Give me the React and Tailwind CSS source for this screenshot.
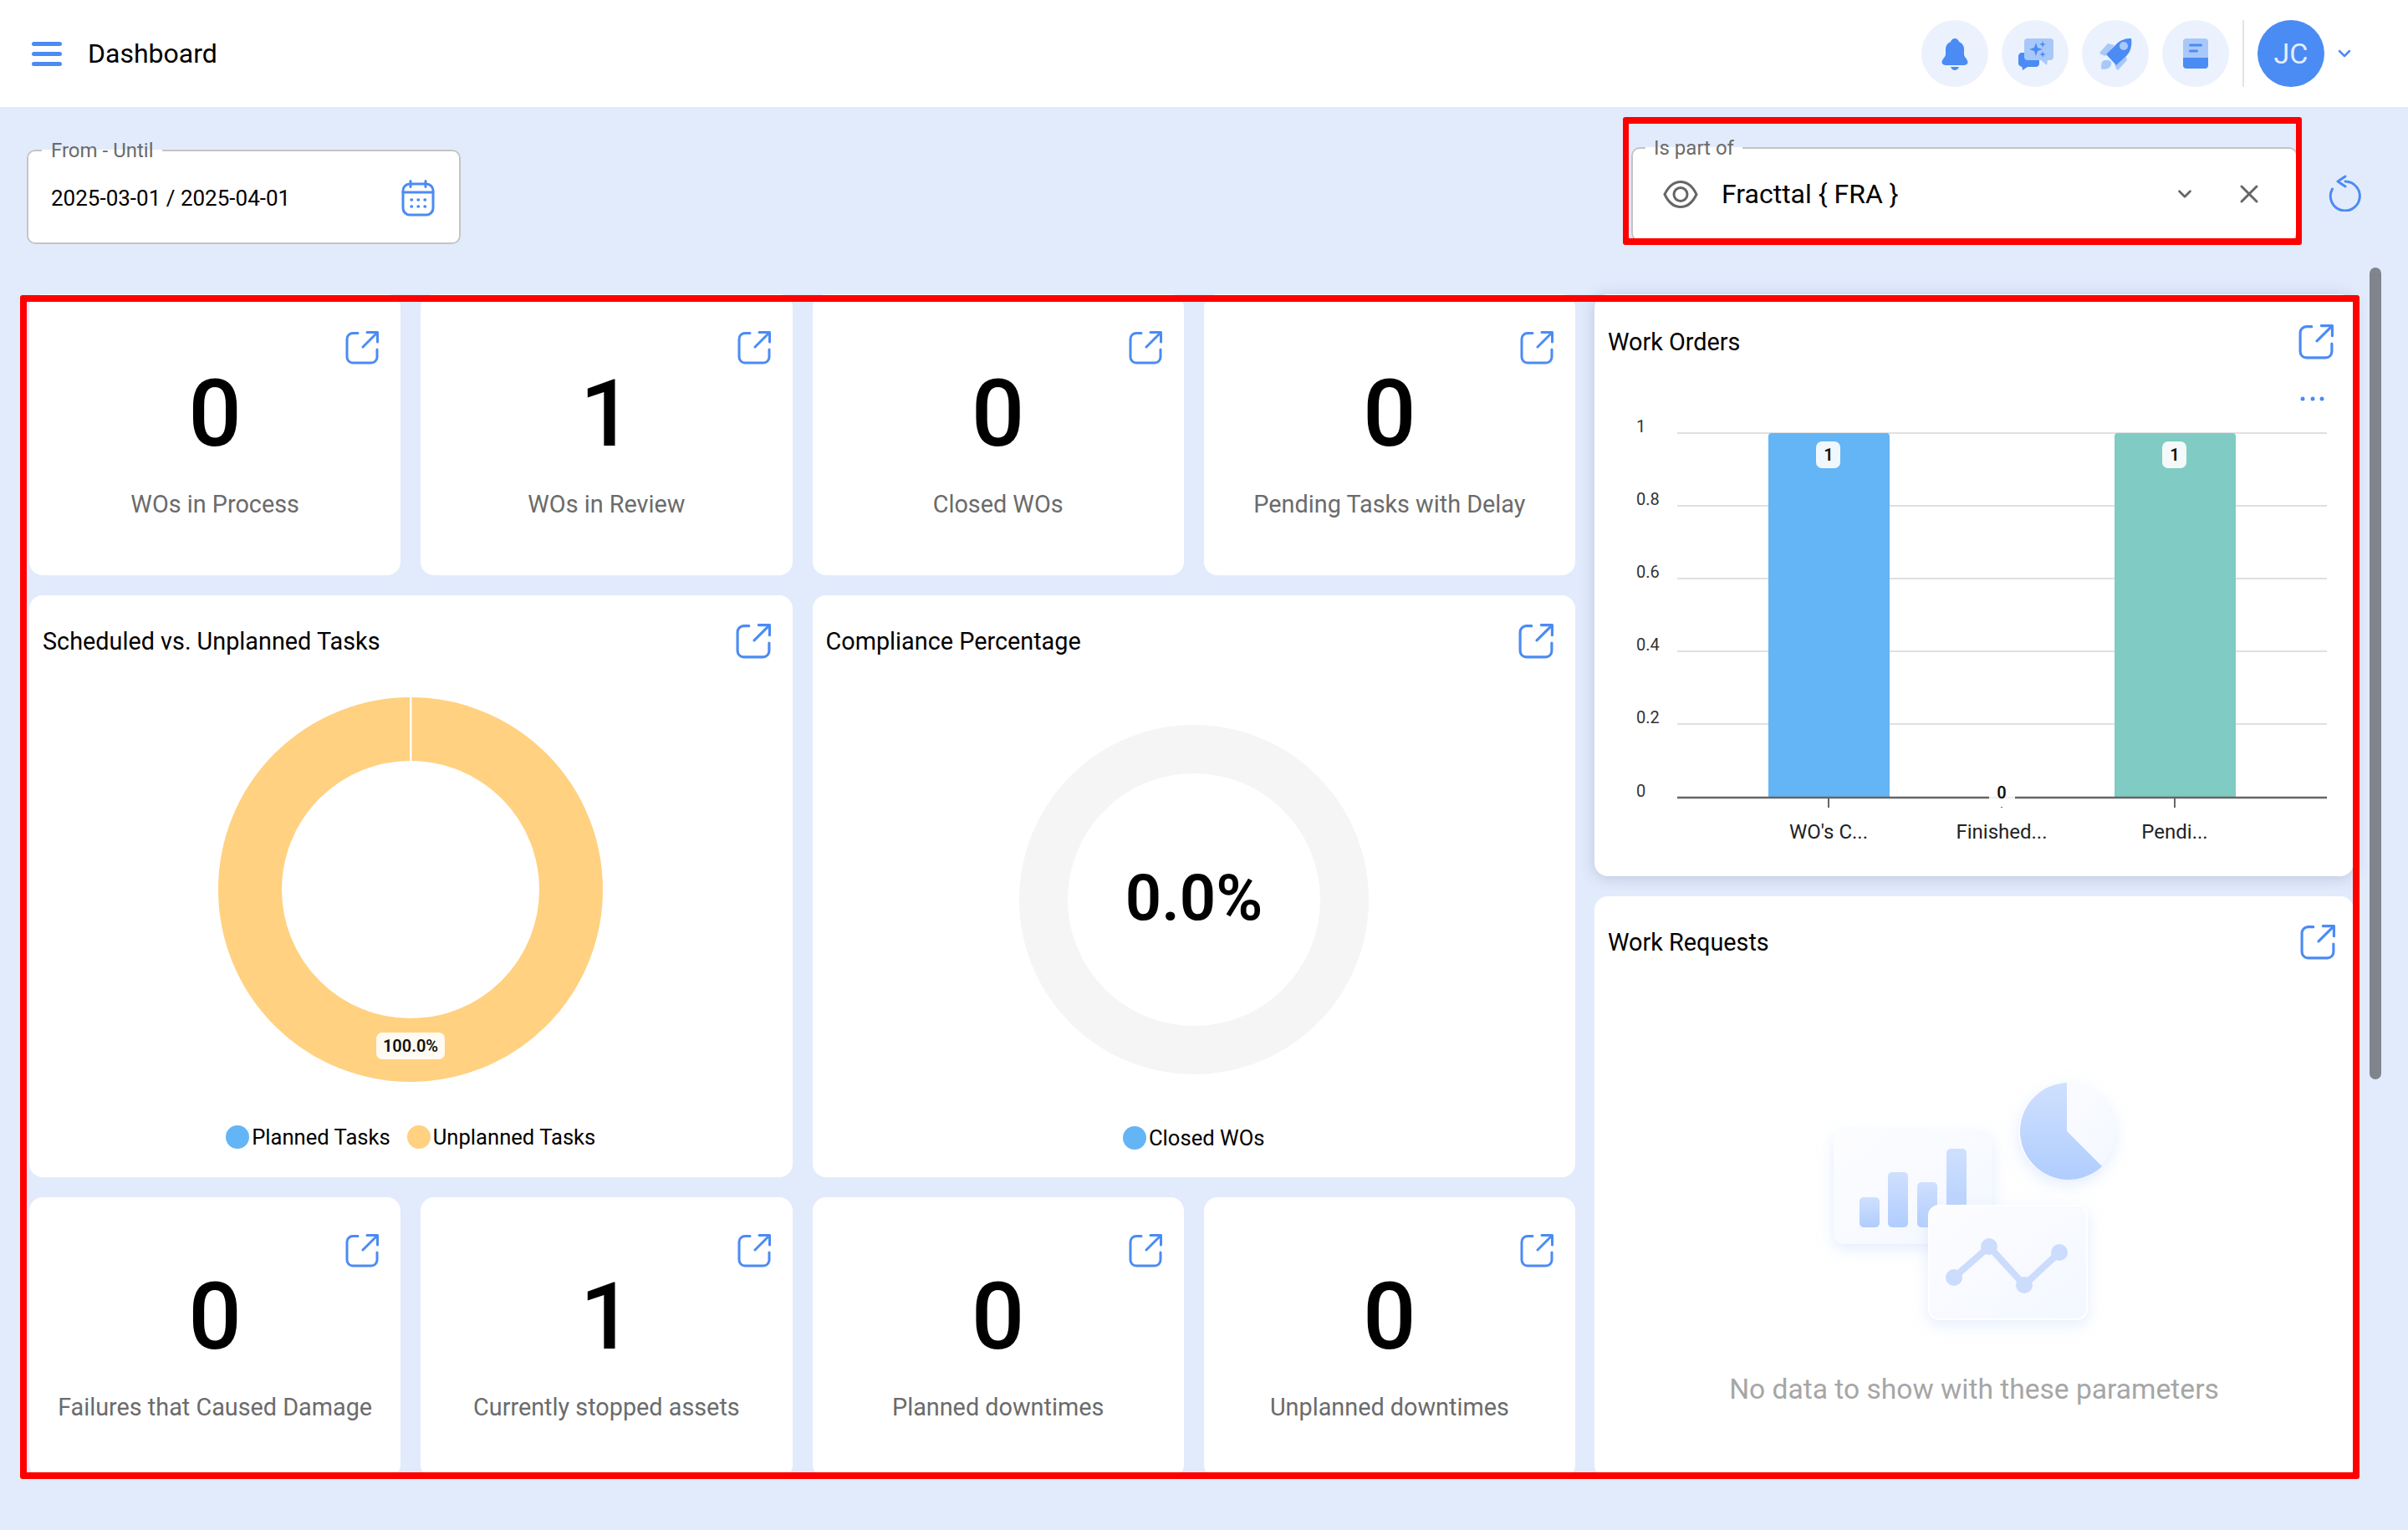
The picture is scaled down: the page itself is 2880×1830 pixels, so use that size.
import { ChevronDown, X } from 'lucide-react';

const OpenIcon = ({ className = 'w-[40px] h-[40px]' }) => (
    <svg viewBox="0 0 40 40" fill="none" stroke="#4b8bf4" strokeWidth="3" strokeLinecap="round" strokeLinejoin="round" className={className}>
        <path d="M15 2.5H9A7 7 0 0 0 2 9.500V31a7 7 0 0 0 7 7h22a7 7 0 0 0 7-7V22" />
        <path d="M21 19 38 2" />
        <path d="M26 1.500H38.500V13" />
    </svg>
);

const StatCard = ({ value, label }) => (
    <div className="bg-white rounded-2xl h-[336px] flex flex-col">
        <div className="flex justify-end pt-[44px] pr-[26px]">
            <OpenIcon />
        </div>
        <div className="mt-[3px] text-center text-[112px] leading-[112px] font-medium text-black">{value}</div>
        <div className="mt-[32px] text-center text-[28.8px] leading-[40px] text-[#6b6b6b]">{label}</div>
    </div>
);

const CardHeader = ({ title, left = 'pl-[16px]', right = 'pr-[26px]', top = 'pt-[34px]' }) => (
    <div className={`flex items-center justify-between ${left} ${right} ${top}`}>
        <span className="text-[28.8px] leading-[42px] text-black">{title}</span>
        <OpenIcon className="w-[42px] h-[42px]" />
    </div>
);

const LegendItem = ({ color, label }) => (
    <div className="flex items-center gap-[3px]">
        <span className={`w-[28px] h-[28px] rounded-full ${color}`} />
        <span className="text-[25.6px] leading-[28px] text-black">{label}</span>
    </div>
);

const IconCircle = ({ children }) => (
    <div className="w-[80px] h-[80px] rounded-full bg-[#ebf2fd]">
        <svg viewBox="0 0 80 80" className="w-full h-full">{children}</svg>
    </div>
);

const Donut = () => (
    <svg viewBox="0 0 460 460" className="w-[460px] h-[460px]">
        <circle cx="230" cy="230" r="192" fill="none" stroke="#ffd180" strokeWidth="76" />
        <rect x="229" y="0" width="2.500" height="77" fill="#ffffff" />
        <rect x="189" y="401" width="82" height="32" rx="7" fill="#ffffff" fillOpacity="0.9" />
        <text x="230" y="424" textAnchor="middle" fontSize="20" fontWeight="600" fontFamily="Roboto, sans-serif" fill="#111111">100.0%</text>
    </svg>
);

const Gauge = () => (
    <svg viewBox="0 0 418 418" className="w-[418px] h-[418px]">
        <circle cx="209" cy="209" r="180" fill="none" stroke="#f5f5f5" strokeWidth="58" />
        <text x="209" y="233" textAnchor="middle" fontSize="76" fontWeight="600" fontFamily="Roboto, sans-serif" fill="#000000">0.0%</text>
    </svg>
);

const gridLines = [
    { y: 88, label: '1' },
    { y: 175, label: '0.8' },
    { y: 262, label: '0.6' },
    { y: 349, label: '0.4' },
    { y: 436, label: '0.2' },
];

const WorkOrdersChart = () => (
    <svg viewBox="0 0 908 619" className="w-[908px] h-[619px]" fontFamily="Roboto, sans-serif">
        <circle cx="847" cy="47" r="2.500" fill="#4b8bf4" />
        <circle cx="859" cy="47" r="2.500" fill="#4b8bf4" />
        <circle cx="870" cy="47" r="2.500" fill="#4b8bf4" />
        {gridLines.map(line => (
            <g key={line.label}>
                <line x1="99" x2="876" y1={line.y} y2={line.y} stroke="#e0e0e0" strokeWidth="2" />
                <text x="50" y={line.y - 1} fontSize="20" fill="#333333">{line.label}</text>
            </g>
        ))}
        <text x="50" y="523" fontSize="20" fill="#333333">0</text>
        <path d="M208 92a4 4 0 0 1 4-4h137a4 4 0 0 1 4 4v431H208z" fill="#64b5f6" />
        <path d="M622 92a4 4 0 0 1 4-4h137a4 4 0 0 1 4 4v431H622z" fill="#80cbc4" />
        <line x1="99" x2="876" y1="524" y2="524" stroke="#666666" strokeWidth="2.500" />
        <line x1="280" x2="280" y1="524" y2="536" stroke="#666666" strokeWidth="2" />
        <line x1="487" x2="487" y1="524" y2="536" stroke="#666666" strokeWidth="2" strokeDasharray="2 9" />
        <line x1="694" x2="694" y1="524" y2="536" stroke="#666666" strokeWidth="2" />
        <rect x="265" y="98" width="29" height="32" rx="7" fill="#ffffff" fillOpacity="0.9" />
        <text x="280" y="121" textAnchor="middle" fontSize="20" fontWeight="600" fill="#111111">1</text>
        <rect x="679" y="98" width="29" height="32" rx="7" fill="#ffffff" fillOpacity="0.9" />
        <text x="694" y="121" textAnchor="middle" fontSize="20" fontWeight="600" fill="#111111">1</text>
        <rect x="472" y="504" width="31" height="30" rx="6" fill="#ffffff" fillOpacity="0.9" />
        <text x="487" y="525" textAnchor="middle" fontSize="20" fontWeight="600" fill="#111111">0</text>
        <text x="280" y="573" textAnchor="middle" fontSize="24" fill="#222222">WO's C...</text>
        <text x="487" y="573" textAnchor="middle" fontSize="24" fill="#222222">Finished...</text>
        <text x="694" y="573" textAnchor="middle" fontSize="24" fill="#222222">Pendi...</text>
    </svg>
);

const NoDataIllustration = () => (
    <svg viewBox="0 0 500 380" className="w-[500px] h-[380px] self-start ml-[194px]">
        <defs>
            <linearGradient id="blueFill" x1="0" y1="0" x2="0" y2="1">
                <stop offset="0" stopColor="#cfe0fe" />
                <stop offset="1" stopColor="#b0cdfe" />
            </linearGradient>
            <linearGradient id="paleFill" x1="0" y1="0" x2="1" y2="1">
                <stop offset="0" stopColor="#fdfdff" />
                <stop offset="1" stopColor="#f3f7ff" />
            </linearGradient>
            <filter id="softShadow" x="-30%" y="-30%" width="160%" height="170%">
                <feDropShadow dx="0" dy="6" stdDeviation="9" floodColor="#c9dafc" floodOpacity="0.5" />
            </filter>
        </defs>
        <rect x="92" y="113" width="190" height="135" rx="12" fill="url(#paleFill)" filter="url(#softShadow)" />
        <rect x="123" y="192" width="24" height="36" rx="5" fill="url(#blueFill)" />
        <rect x="157" y="162" width="24" height="66" rx="5" fill="url(#blueFill)" />
        <rect x="192" y="174" width="24" height="54" rx="5" fill="url(#blueFill)" />
        <rect x="227" y="134" width="24" height="94" rx="5" fill="url(#blueFill)" />
        <g filter="url(#softShadow)">
            <circle cx="371" cy="113" r="58" fill="url(#paleFill)" />
            <path d="M371 113 413 155A58 58 0 1 1 371 55Z" fill="url(#blueFill)" />
        </g>
        <rect x="206" y="202" width="189" height="136" rx="12" fill="url(#paleFill)" stroke="#ffffff" strokeWidth="2" filter="url(#softShadow)" />
        <path d="M236 288 278 251 320 297 362 258" fill="none" stroke="#cbdcfd" strokeWidth="8" />
        <circle cx="236" cy="288" r="10" fill="#cbdcfd" />
        <circle cx="278" cy="251" r="10" fill="#cbdcfd" />
        <circle cx="320" cy="297" r="10" fill="#cbdcfd" />
        <circle cx="362" cy="258" r="10" fill="#cbdcfd" />
    </svg>
);

const App = () => {
    return (
        <div className="relative min-h-[1830px] overflow-hidden bg-[#e2ebfc] font-['Roboto',sans-serif]">
            {/* top bar */}
            <header className="h-[128px] bg-white flex items-center pl-[38px] pr-[64px]">
                <div className="flex flex-col gap-[7px] w-[36px]">
                    <span className="h-[5px] rounded-full bg-[#4b8bf4]" />
                    <span className="h-[5px] rounded-full bg-[#4b8bf4]" />
                    <span className="h-[5px] rounded-full bg-[#4b8bf4]" />
                </div>
                <span className="ml-[31px] text-[32px] text-black">Dashboard</span>

                <div className="ml-auto flex items-center gap-[16px]">
                    <IconCircle>
                        <path d="M40 22c-2.500 0-4.500 2-5 4-4 1.500-6 5-6 9v6c0 3-4.500 6-4.500 9.500 0 2 1.500 3 4 3.500h23c2.500-.5 4-1.500 4-3.500 0-3.500-4.500-6.500-4.500-9.500v-6c0-4-2-7.500-6-9-.5-2-2.500-4-5-4z" fill="#4b8bf4" />
                        <path d="M35 56h10c-1 2.500-3 4-5 4s-4-1.500-5-4z" fill="#4b8bf4" />
                    </IconCircle>
                    <IconCircle>
                        <path d="M24 39h17c2 0 4 2 4 4v9c0 2.500-2 4-4 4H31l-6 4-.5-4c-2.500-.5-4.500-2-4.500-4v-9c0-2 2-4 4-4z" fill="#4b8bf4" />
                        <path d="M31 22h27c2.500 0 4 1.500 4 4v18c0 2.500-1.500 4-4 4h-3l-1 6-7-6H31c-2.500 0-4-1.500-4-4V26c0-2.500 1.500-4 4-4z" fill="#a9c8fa" />
                        <path d="M41 27l2 6 6 2-6 2-2 6-2-6-6-2 6-2zM49 25l1 3 3 1-3 1-1 3-1-3-3-1 3-1zM49 37l1 3 3 1-3 1-1 3-1-3-3-1 3-1z" fill="#4b8bf4" />
                    </IconCircle>
                    <IconCircle>
                        <path d="M22 38l9-10 8 2-11 13-5-2c-1.500-.5-2-2-1-3zM54 48l-10 11c-1 1-2.500.5-3-1l-2-5 13-11z" fill="#a9c8fa" />
                        <path d="M24 50c3-3 9-3 11 0 1 3-1 7-4 8-2 1-6 1-8 .5 0-3 0-6 1-8.500z" fill="#a9c8fa" />
                        <path d="M59 22c1 7 0 14-5 20L41 54 29 41 43 27c5-4 10-5 16-5z" fill="#4b8bf4" />
                        <circle cx="50" cy="31" r="5" fill="#a9c8fa" />
                    </IconCircle>
                    <IconCircle>
                        <path d="M29 22h22c2.500 0 4 1.500 4 4v20H25V26c0-2.500 1.500-4 4-4z" fill="#a9c8fa" />
                        <path d="M25 45h30v9c0 2.500-1.500 4-4 4H29c-2.500 0-4-1.500-4-4z" fill="#4b8bf4" />
                        <rect x="32" y="28.500" width="16" height="3" rx="1.500" fill="#4b8bf4" />
                        <rect x="32" y="35.500" width="11" height="3" rx="1.500" fill="#4b8bf4" />
                    </IconCircle>
                    <span className="w-[2px] h-[80px] bg-[#e4e4e4]" />
                    <div className="w-[80px] h-[80px] rounded-full bg-[#4b8bf4] flex items-center justify-center text-[34px] text-[#e3edfe]">JC</div>
                    <ChevronDown className="w-[24px] h-[24px] text-[#4b8bf4] -ml-[4px]" strokeWidth={2.5} />
                </div>
            </header>

            {/* filters */}
            <div className="h-[224px] flex items-start pt-[37px] pl-[32px] pr-[55px]">
                <fieldset className="mt-[3px] w-[519px] h-[124px] border-2 border-[#c4c4c4] rounded-[10px] bg-white">
                    <legend className="ml-[16px] px-[11px] text-[24px] leading-[24px] text-[#6b6b6b]">From - Until</legend>
                    <div className="flex items-center justify-between pl-[27px] pr-[29px] pb-[8px] h-full">
                        <span className="text-[26px] text-black">2025-03-01 / 2025-04-01</span>
                        <svg viewBox="0 0 40 44" fill="none" stroke="#4b8bf4" strokeWidth="3" strokeLinecap="round" className="w-[40px] h-[44px]">
                            <rect x="2" y="5" width="36" height="37" rx="8" />
                            <path d="M2 15h36M11 1.500v7M29 1.500v7" />
                            <path d="M12 24h.5M20 24h.5M28 24h.5M12 32h.5M20 32h.5M28 32h.5" strokeWidth="3.500" />
                        </svg>
                    </div>
                </fieldset>

                <fieldset className="ml-auto w-[797px] h-[124px] border-2 border-[#c4c4c4] rounded-[10px] bg-white">
                    <legend className="ml-[15px] px-[10px] text-[24px] leading-[24px] text-[#6b6b6b]">Is part of</legend>
                    <div className="flex items-center pl-[36px] pb-[12px] h-full">
                        <svg viewBox="0 0 42 35" fill="none" stroke="#666666" strokeWidth="3" className="w-[42px] h-[35px]">
                            <path d="M2 17.500C7 7 14 2.500 21 2.500S35 7 40 17.500C35 28 28 32.500 21 32.500S7 28 2 17.500Z" />
                            <circle cx="21" cy="17.500" r="8" />
                        </svg>
                        <span className="ml-[28px] text-[32px] text-black">Fracttal {'{'} FRA {'}'}</span>
                        <ChevronDown className="ml-auto w-[26px] h-[26px] text-[#666666]" strokeWidth={2.5} />
                        <X className="ml-[46px] mr-[38px] w-[36px] h-[36px] text-[#666666]" strokeWidth={2} />
                    </div>
                </fieldset>

                <svg viewBox="0 0 40 44" fill="none" stroke="#4b8bf4" strokeWidth="3" strokeLinecap="round" strokeLinejoin="round" className="ml-[37px] mt-[44px] w-[40px] h-[44px]">
                    <path d="M20 8A17.500 17.500 0 1 1 4.500 17" />
                    <path d="M20 2 11 8l9 6" />
                </svg>
            </div>

            {/* widgets */}
            <main className="pl-[35px] grid grid-cols-[1849px_908px] gap-x-[23px]">
                <div className="grid grid-cols-4 gap-[24px]">
                    <StatCard value="0" label="WOs in Process" />
                    <StatCard value="1" label="WOs in Review" />
                    <StatCard value="0" label="Closed WOs" />
                    <StatCard value="0" label="Pending Tasks with Delay" />

                    <div className="col-span-2 bg-white rounded-2xl h-[696px] flex flex-col">
                        <CardHeader title="Scheduled vs. Unplanned Tasks" />
                        <div className="mt-[46px] flex justify-center"><Donut /></div>
                        <div className="mt-[52px] flex justify-center gap-[20px]">
                            <LegendItem color="bg-[#64b5f6]" label="Planned Tasks" />
                            <LegendItem color="bg-[#ffd180]" label="Unplanned Tasks" />
                        </div>
                    </div>
                    <div className="col-span-2 bg-white rounded-2xl h-[696px] flex flex-col">
                        <CardHeader title="Compliance Percentage" />
                        <div className="mt-[79px] flex justify-center"><Gauge /></div>
                        <div className="mt-[62px] flex justify-center">
                            <LegendItem color="bg-[#64b5f6]" label="Closed WOs" />
                        </div>
                    </div>

                    <StatCard value="0" label="Failures that Caused Damage" />
                    <StatCard value="1" label="Currently stopped assets" />
                    <StatCard value="0" label="Planned downtimes" />
                    <StatCard value="0" label="Unplanned downtimes" />
                </div>

                <div className="flex flex-col gap-[24px]">
                    <div className="bg-white rounded-2xl h-[696px] shadow-[0_2px_18px_rgba(50,70,110,0.22)]">
                        <CardHeader title="Work Orders" right="pr-[24px]" top="pt-[36px]" />
                        <WorkOrdersChart />
                    </div>
                    <div className="bg-white rounded-2xl h-[696px] flex flex-col items-center">
                        <div className="w-full"><CardHeader title="Work Requests" right="pr-[22px]" /></div>
                        <div className="mt-[92px] w-full flex"><NoDataIllustration /></div>
                        <p className="mt-[22px] text-[33.6px] leading-[40px] text-[#a6a6a6]">No data to show with these parameters</p>
                    </div>
                </div>
            </main>

            {/* scrollbar + annotation boxes */}
            <div className="absolute left-[2834px] top-[320px] w-[14px] h-[971px] rounded-full bg-[#80848c]" />
            <div className="absolute left-[1941px] top-[140px] w-[812px] h-[153px] border-x-[7px] border-y-[8px] border-[#ff0000] rounded-[3px] pointer-events-none" />
            <div className="absolute left-[24px] top-[353px] w-[2798px] h-[1416px] border-[8px] border-[#ff0000] rounded-[3px] pointer-events-none" />
        </div>
    );
};

export default App;
